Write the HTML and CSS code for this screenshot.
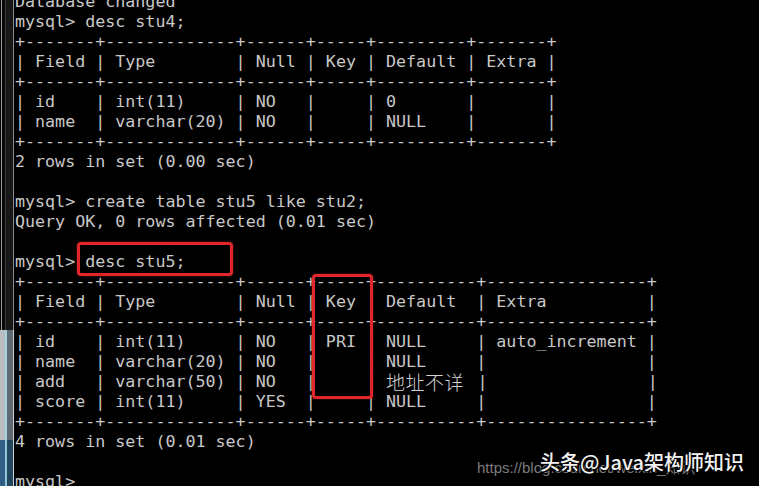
FILE: index.html
```html
<!DOCTYPE html>
<html lang="zh">
<head>
<meta charset="utf-8">
<title>mysql desc stu5</title>
<link rel="stylesheet" href="styles.css">
</head>
<body>
<div class="screen">
  <div class="frame">
    <div class="frame-top"></div>
    <div class="frame-mid"></div>
    <div class="frame-bottom"></div>
  </div>
  <div class="term">
<pre class="console">Database changed
mysql&gt; desc stu4;
+-------+-------------+------+-----+---------+-------+
| Field | Type        | Null | Key | Default | Extra |
+-------+-------------+------+-----+---------+-------+
| id    | int(11)     | NO   |     | 0       |       |
| name  | varchar(20) | NO   |     | NULL    |       |
+-------+-------------+------+-----+---------+-------+
2 rows in set (0.00 sec)

mysql&gt; create table stu5 like stu2;
Query OK, 0 rows affected (0.01 sec)

mysql&gt; desc stu5;
+-------+-------------+------+-----+----------+----------------+
| Field | Type        | Null | Key | Default  | Extra          |
+-------+-------------+------+-----+----------+----------------+
| id    | int(11)     | NO   | PRI | NULL     | auto_increment |
| name  | varchar(20) | NO   |     | NULL     |                |
| add   | varchar(50) | NO   |     | <span class="cjk">地址不详</span> |                |
| score | int(11)     | YES  |     | NULL     |                |
+-------+-------------+------+-----+----------+----------------+
4 rows in set (0.01 sec)

mysql&gt;
</pre>
    <div class="mark mark-cmd"></div>
    <div class="mark mark-key"></div>
    <div class="wm-url">https://blog.csdn.net/weixin_知识</div>
    <div class="wm-label">头条@Java架构师知识</div>
  </div>
</div>
</body>
</html>
```

FILE: styles.css
```css
html, body {
  margin: 0;
  padding: 0;
  background: #000;
  overflow: hidden;
}

.screen {
  display: flex;
  width: 759px;
  height: 486px;
  overflow: hidden;
  background: #000;
}

.frame {
  width: 15px;
  flex: 0 0 15px;
  display: flex;
  flex-direction: column;
}

.frame-top {
  flex: 0 0 330px;
  background:
    linear-gradient(90deg,
      #050505 0px, #050505 1px,
      #9a9a9a 1px, #9a9a9a 2px,
      #0a0a0a 2px, #0a0a0a 5px,
      #3a3a3a 5px, #3a3a3a 6px,
      #181818 6px, #181818 13px,
      #8a8a8a 13px, #8a8a8a 14px,
      #050505 14px);
}

.frame-mid {
  flex: 0 0 110px;
  background:
    linear-gradient(90deg,
      #b9bcc0 0px, #b9bcc0 5px,
      #a8d0e0 5px, #a8d0e0 7px,
      #5d6a74 7px, #5d6a74 13px,
      #d0d0d0 13px, #d0d0d0 14px,
      #050505 14px);
}

.frame-bottom {
  flex: 1 1 auto;
  background:
    linear-gradient(90deg,
      #2f5e86 0px, #2f5e86 5px,
      #8fc4da 5px, #8fc4da 7px,
      #23465f 7px, #23465f 13px,
      #d0d0d0 13px, #d0d0d0 14px,
      #050505 14px);
}

.term {
  position: relative;
  flex: 1 1 auto;
  overflow: hidden;
}

.console {
  margin: -8px 0 0 0;
  padding: 0;
  font-family: "DejaVu Sans Mono", "Liberation Mono", monospace;
  font-size: 16.66px;
  line-height: 20px;
  color: #c8c8c8;
  white-space: pre;
}

.cjk {
  display: inline-block;
  width: 8ch;
  height: 20px;
  vertical-align: top;
  font-family: "Noto Sans CJK SC", sans-serif;
  font-size: 19px;
  font-weight: 300;
  line-height: 20px;
  letter-spacing: 0.5px;
  color: #d4d4d4;
}

.mark {
  position: absolute;
  border: 3px solid #e0262a;
  border-radius: 4px;
  box-shadow: 0 0 2px rgba(224, 38, 42, 0.6);
}

.mark-cmd {
  left: 62px;
  top: 242px;
  width: 150px;
  height: 28px;
}

.mark-key {
  left: 297px;
  top: 274px;
  width: 55px;
  height: 119px;
}

.wm-url {
  position: absolute;
  left: 462px;
  top: 456px;
  font-family: "Liberation Sans", Arial, "Noto Sans CJK SC", sans-serif;
  font-size: 15px;
  color: #7c7c7c;
  white-space: nowrap;
}

.wm-label {
  position: absolute;
  left: 525px;
  top: 449px;
  font-family: "Noto Sans CJK SC", "Liberation Sans", sans-serif;
  font-size: 20px;
  line-height: 26px;
  font-weight: 500;
  color: #f2f2f2;
  white-space: nowrap;
  text-shadow: 0 0 2px #000, 1px 1px 1px #000, -1px -1px 1px #000;
}
```
